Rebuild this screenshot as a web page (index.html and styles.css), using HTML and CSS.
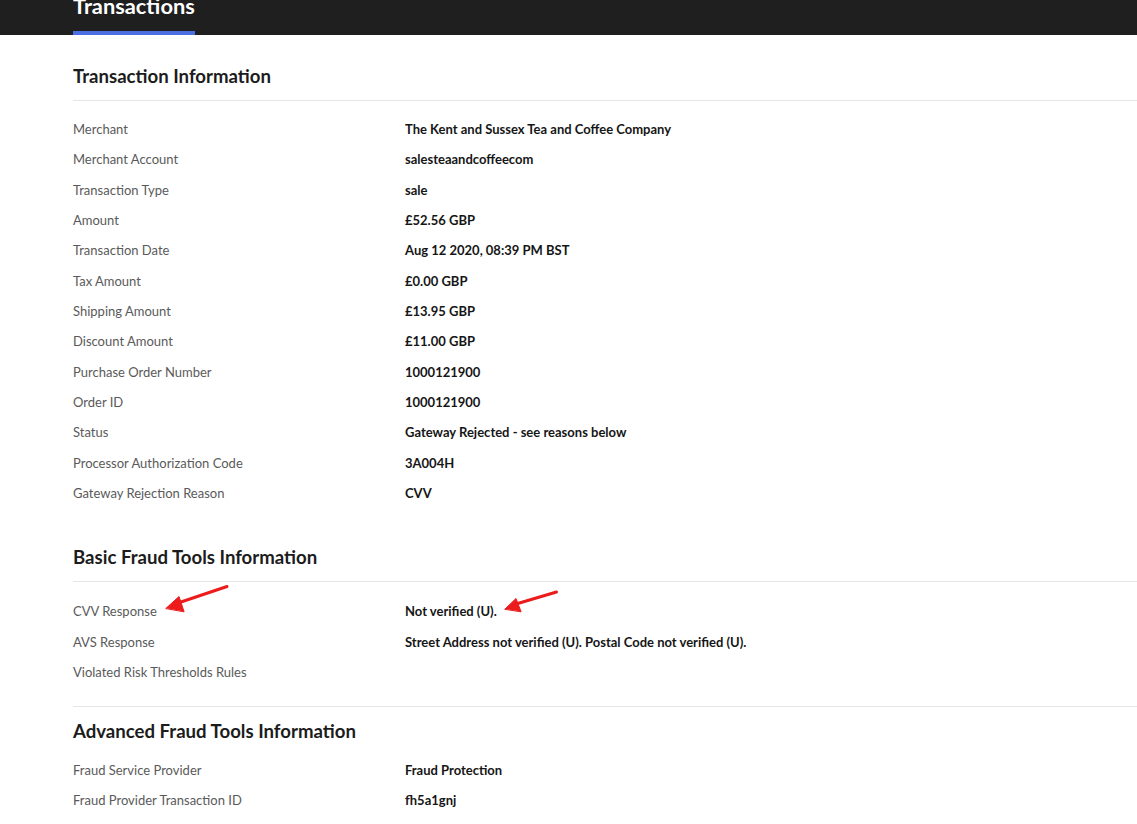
FILE: index.html
```html
<!DOCTYPE html>
<html lang="en">
<head>
<meta charset="utf-8">
<title>Transactions</title>
<link rel="stylesheet" href="styles.css">
</head>
<body>
<header class="topbar">
  <div class="tab"><span class="tab-text">Transactions</span></div>
</header>
<main class="content">
  <section class="section">
    <h2 class="section-title">Transaction Information</h2>
    <div class="divider"></div>
    <div class="rows">
      <div class="row"><span class="label">Merchant</span><span class="value">The Kent and Sussex Tea and Coffee Company</span></div>
      <div class="row"><span class="label">Merchant Account</span><span class="value">salesteaandcoffeecom</span></div>
      <div class="row"><span class="label">Transaction Type</span><span class="value">sale</span></div>
      <div class="row"><span class="label">Amount</span><span class="value">£52.56 GBP</span></div>
      <div class="row"><span class="label">Transaction Date</span><span class="value">Aug 12 2020, 08:39 PM BST</span></div>
      <div class="row"><span class="label">Tax Amount</span><span class="value">£0.00 GBP</span></div>
      <div class="row"><span class="label">Shipping Amount</span><span class="value">£13.95 GBP</span></div>
      <div class="row"><span class="label">Discount Amount</span><span class="value">£11.00 GBP</span></div>
      <div class="row"><span class="label">Purchase Order Number</span><span class="value">1000121900</span></div>
      <div class="row"><span class="label">Order ID</span><span class="value">1000121900</span></div>
      <div class="row"><span class="label">Status</span><span class="value">Gateway Rejected - see reasons below</span></div>
      <div class="row"><span class="label">Processor Authorization Code</span><span class="value">3A004H</span></div>
      <div class="row"><span class="label">Gateway Rejection Reason</span><span class="value">CVV</span></div>
    </div>
  </section>
  <section class="section section-2">
    <h2 class="section-title">Basic Fraud Tools Information</h2>
    <div class="divider"></div>
    <div class="rows">
      <div class="row"><span class="label">CVV Response</span><span class="value">Not verified (U).</span></div>
      <div class="row"><span class="label">AVS Response</span><span class="value">Street Address not verified (U). Postal Code not verified (U).</span></div>
      <div class="row"><span class="label">Violated Risk Thresholds Rules</span><span class="value"></span></div>
    </div>
    <div class="divider divider-end"></div>
  </section>
  <section class="section section-3">
    <h2 class="section-title">Advanced Fraud Tools Information</h2>
    <div class="rows">
      <div class="row"><span class="label">Fraud Service Provider</span><span class="value">Fraud Protection</span></div>
      <div class="row"><span class="label">Fraud Provider Transaction ID</span><span class="value">fh5a1gnj</span></div>
    </div>
  </section>
</main>
<svg class="annotations" width="1137" height="824" viewBox="0 0 1137 824" aria-hidden="true">
  <g stroke="#ec1c1c" stroke-width="3" stroke-linecap="round" fill="#ec1c1c">
    <line x1="227" y1="586.5" x2="178" y2="603"/>
    <polygon points="166,608.3 179,596.5 184,611.5" stroke-width="1" stroke-linejoin="round"/>
    <line x1="556.5" y1="592" x2="516" y2="604"/>
    <polygon points="505,609 516,598.5 521,611.5" stroke-width="1" stroke-linejoin="round"/>
  </g>
</svg>
</body>
</html>
```

FILE: styles.css
```css
html, body {
  margin: 0;
  padding: 0;
  background: #ffffff;
}

body {
  position: relative;
  font-family: "Lato", "Noto Sans", "Liberation Sans", sans-serif;
  color: #1c1c1c;
  width: 1137px;
  height: 824px;
  overflow: hidden;
}

.topbar {
  height: 35px;
  background: #1f1f1f;
  padding-left: 73px;
  display: flex;
  align-items: flex-start;
  overflow: hidden;
}

.tab {
  height: 35px;
  box-sizing: border-box;
  width: 122px;
  border-bottom: 4px solid #4b6fe2;
  overflow: visible;
}

.tab-text {
  display: block;
  margin-top: -5px;
  font-size: 21.8px;
  line-height: 22px;
  font-weight: 700;
  color: #ffffff;
  white-space: nowrap;
}

.content {
  padding-left: 73px;
  padding-top: 29px;
}

.section-title {
  margin: 0 0 12px 0;
  font-size: 18.6px;
  line-height: 24px;
  font-weight: 700;
  color: #1c1c1c;
}

.divider {
  height: 1px;
  background: #e6e6e6;
}

.rows {
  padding-top: 13px;
}

.row {
  display: flex;
  height: 30.33px;
  line-height: 30.33px;
  font-size: 13px;
}

.label {
  width: 332px;
  flex: none;
  color: #5a5a5a;
}

.value {
  color: #161616;
  font-weight: 700;
}

.section-2 {
  margin-top: 37px;
}

.section-2 .rows {
  padding-top: 14px;
}

.divider-end {
  margin-top: 19px;
}

.section-3 {
  margin-top: 12px;
}

.section-3 .rows {
  padding-top: 0;
}

.section-3 .row {
  height: 30px;
  line-height: 30px;
}

.annotations {
  position: absolute;
  top: 0;
  left: 0;
  pointer-events: none;
}
```
